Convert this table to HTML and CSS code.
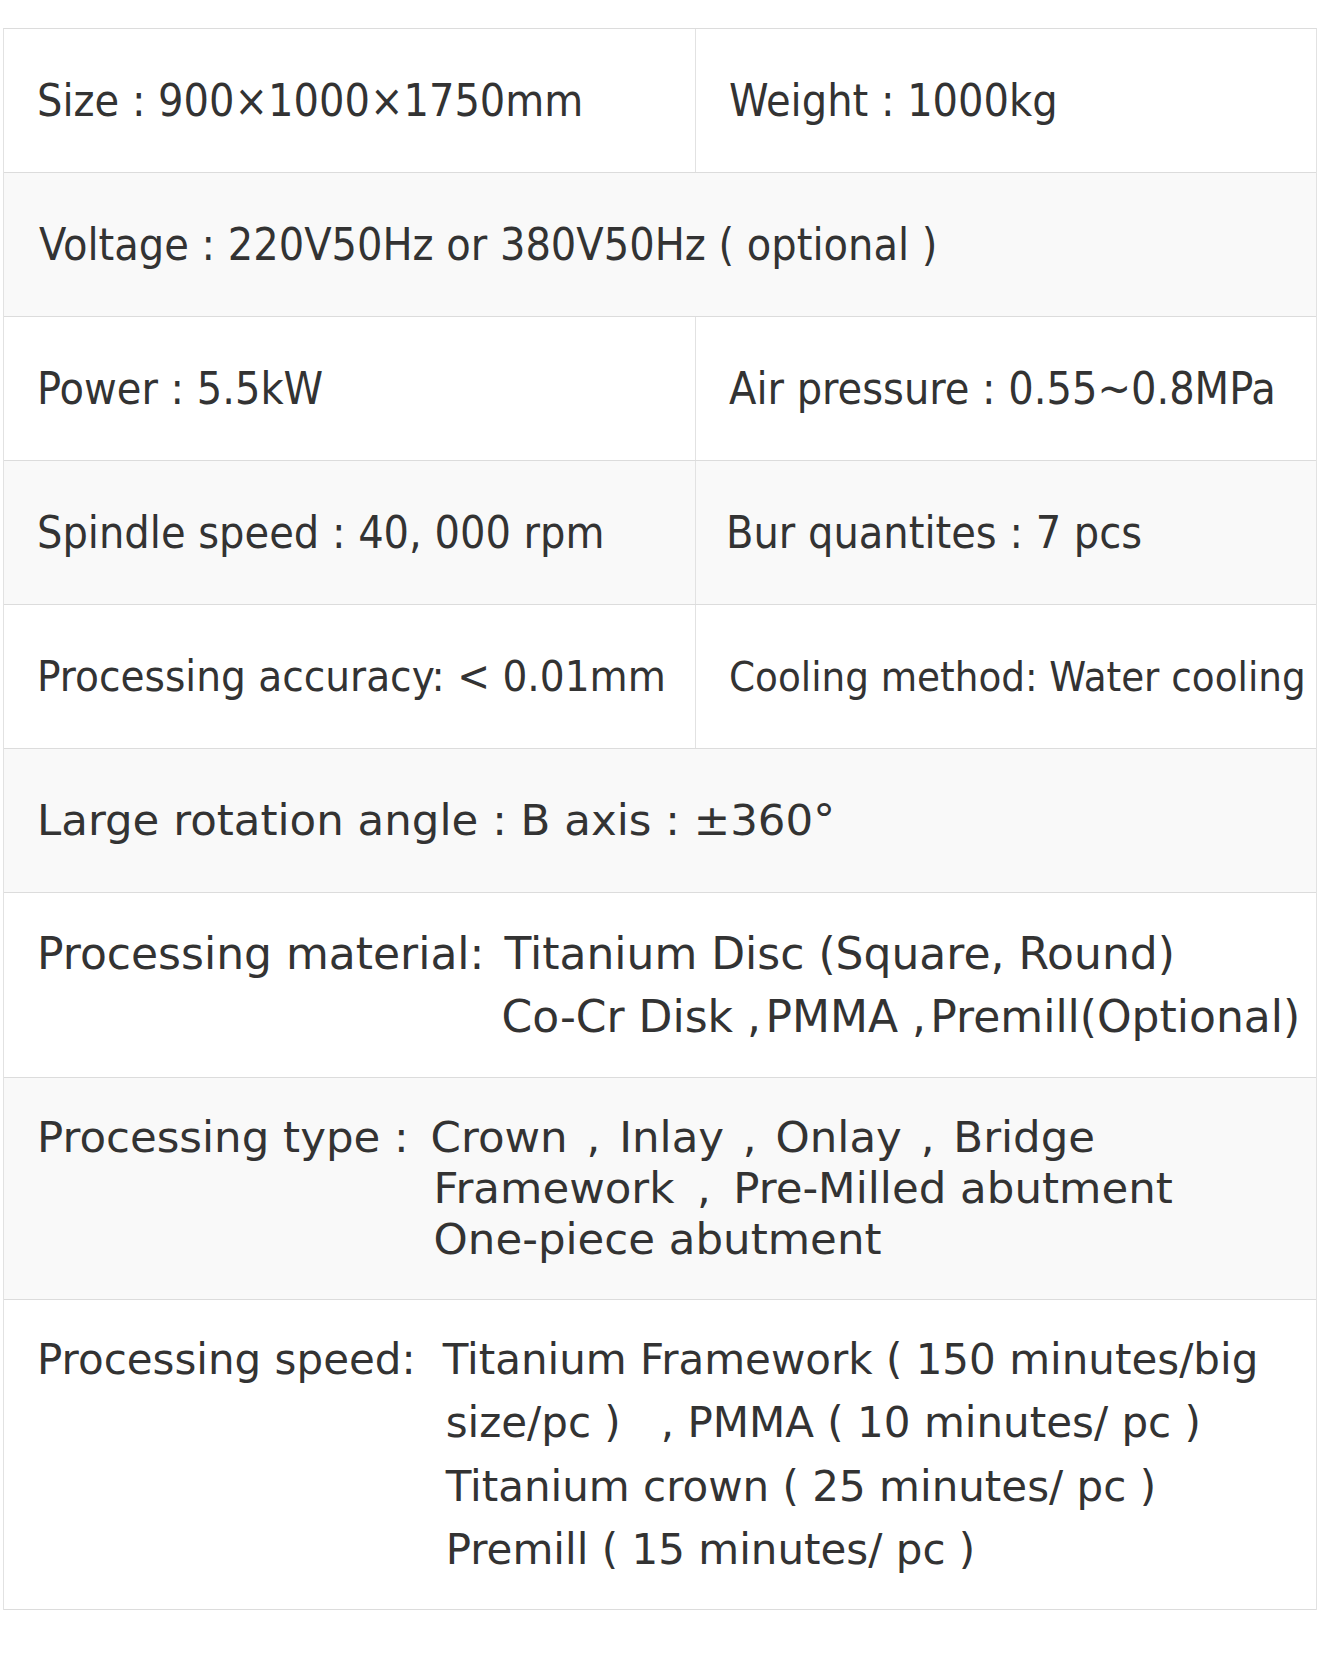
FILE: index.html
```html
<!DOCTYPE html>
<html lang="en">
<head>
<meta charset="utf-8">
<title>Specifications</title>
<link rel="stylesheet" href="styles.css">
</head>
<body>
<div class="spec">
  <div class="row row-std">
    <div class="cell cell-left cond">Size : 900×1000×1750mm</div>
    <div class="cell cell-right cond">Weight : 1000kg</div>
  </div>
  <div class="row row-std row-alt">
    <div class="cell cell-full cond cell-voltage">Voltage : 220V50Hz or 380V50Hz ( optional )</div>
  </div>
  <div class="row row-std">
    <div class="cell cell-left cond">Power : 5.5kW</div>
    <div class="cell cell-right cond">Air pressure : 0.55~0.8MPa</div>
  </div>
  <div class="row row-std row-alt">
    <div class="cell cell-left cond">Spindle speed : 40, 000 rpm</div>
    <div class="cell cell-right cond cell-bur">Bur quantites : 7 pcs</div>
  </div>
  <div class="row row-std">
    <div class="cell cell-left cond cell-accuracy">Processing accuracy: &lt; 0.01mm</div>
    <div class="cell cell-right cond cell-small">Cooling method: Water cooling</div>
  </div>
  <div class="row row-std row-alt">
    <div class="cell cell-full sans">Large rotation angle : B axis : ±360°</div>
  </div>
  <div class="row row-material">
    <div class="cell cell-full sans multi">
      <span class="label label-material">Processing material:</span>
      <div class="lines lines-material">
        <div>Titanium Disc (Square, Round)</div>
        <div class="shift-left">Co-Cr Disk ,&#8202;PMMA ,&#8202;Premill(Optional)</div>
      </div>
    </div>
  </div>
  <div class="row row-type row-alt">
    <div class="cell cell-full sans multi">
      <span class="label label-type">Processing type : </span>
      <div class="lines lines-type">
        <div class="shift-left sep-5">Crown , Inlay , Onlay , Bridge</div>
        <div>Framework&thinsp; , &thinsp;Pre-Milled abutment</div>
        <div>One-piece abutment</div>
      </div>
    </div>
  </div>
  <div class="row row-speed">
    <div class="cell cell-full sans multi speed">
      <span class="label label-speed">Processing speed:</span>
      <div class="lines lines-speed">
        <div class="shift-left">Titanium Framework ( 150 minutes/big</div>
        <div>size/pc )&nbsp;&nbsp;&nbsp;, PMMA ( 10 minutes/ pc )</div>
        <div>Titanium crown ( 25 minutes/ pc )</div>
        <div>Premill ( 15 minutes/ pc )</div>
      </div>
    </div>
  </div>
</div>
</body>
</html>
```

FILE: styles.css
```css
* {
  box-sizing: border-box;
}

html, body {
  margin: 0;
  padding: 0;
  background: #ffffff;
}

body {
  color: #333333;
}

.spec {
  width: 1314px;
  margin: 28px 0 0 3px;
  border-top: 1px solid #dcdcdc;
  border-left: 1px solid #e2e2e2;
  border-right: 1px solid #e2e2e2;
  display: flex;
  flex-direction: column;
}

.row {
  display: flex;
  border-bottom: 1px solid #dcdcdc;
  background: #ffffff;
}

.row-alt {
  background: #f9f9f9;
}

.row-std {
  height: 144px;
}

.row-material {
  height: 185px;
}

.row-type {
  height: 222px;
}

.row-speed {
  height: 310px;
}

.cell {
  display: flex;
  align-items: center;
  padding-left: 33px;
  white-space: pre;
  font-size: 43.5px;
  line-height: 1.2;
}

.cell-left {
  width: 692px;
  flex: none;
  border-right: 1px solid #e2e2e2;
}

.cell-right {
  flex: 1;
  padding-left: 33px;
}

.cell-full {
  flex: 1;
}

.cell-voltage {
  padding-left: 35px;
}

.cell-bur {
  padding-left: 30px;
}

.cond {
  font-family: "DejaVu Sans Condensed", "Noto Sans CJK TC", sans-serif;
  font-size: 44.5px;
}

.cell-accuracy {
  font-size: 43.5px;
}

.cell-small {
  font-size: 41.5px;
}

.sans {
  font-family: "DejaVu Sans", "Noto Sans CJK TC", sans-serif;
}

.multi {
  align-items: center;
  white-space: nowrap;
}

.label {
  flex: none;
  align-self: center;
  white-space: pre;
}

.lines {
  display: flex;
  flex-direction: column;
  white-space: pre;
}

.lines-material {
  line-height: 63px;
  margin-left: 20px;
  font-size: 44px;
}

.label-material {
  font-size: 44px;
  line-height: 63px;
  margin-top: -63px;
}

.lines-type {
  line-height: 51px;
  margin-left: 11px;
}

.label-type {
  line-height: 51px;
  margin-top: -102px;
}

.sep-5 {
  word-spacing: 5px;
}

.speed {
  font-size: 42px;
}

.lines-speed {
  line-height: 63.5px;
  margin-left: 30px;
}

.label-speed {
  line-height: 63.5px;
  margin-top: -190.5px;
}

.shift-left {
  margin-left: -3px;
}
```
